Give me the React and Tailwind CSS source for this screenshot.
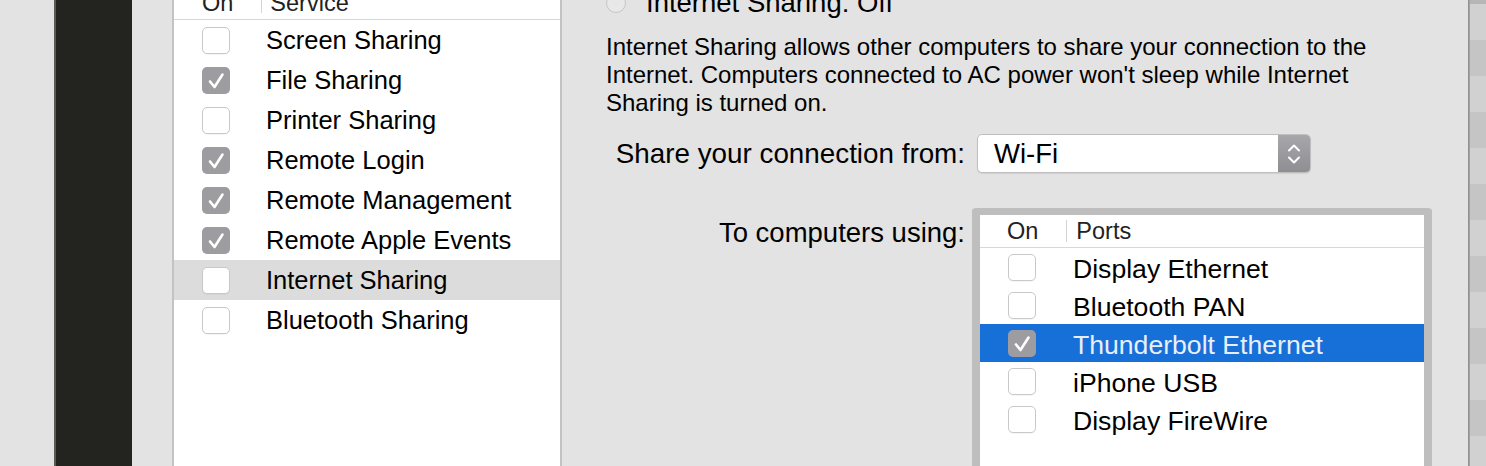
import React from "react";

const services = [
  { name: "Screen Sharing", on: false },
  { name: "File Sharing", on: true },
  { name: "Printer Sharing", on: false },
  { name: "Remote Login", on: true },
  { name: "Remote Management", on: true },
  { name: "Remote Apple Events", on: true },
  { name: "Internet Sharing", on: false, selected: true },
  { name: "Bluetooth Sharing", on: false },
];

const ports = [
  { name: "Display Ethernet", on: false },
  { name: "Bluetooth PAN", on: false },
  { name: "Thunderbolt Ethernet", on: true, selected: true },
  { name: "iPhone USB", on: false },
  { name: "Display FireWire", on: false },
];

// alternating bands of the window peeking in at the right edge
const bands = [0, 1, 2, 3, 4, 5, 6, 7, 8, 9, 10, 11, 12];

const Check = ({ on }) =>
  on ? (
    <span className="flex h-[27px] w-[28px] shrink-0 items-center justify-center rounded-[5px] bg-[#9d9ca1]">
      <svg width="28" height="27" viewBox="0 0 28 27" fill="none">
        <path d="M8 14.5 L12.5 20 L20.5 7.5" stroke="#fff" strokeWidth="2.6" strokeLinecap="round" strokeLinejoin="round" />
      </svg>
    </span>
  ) : (
    <span className="h-[27px] w-[28px] shrink-0 rounded-[5px] border border-[#c9c9c9] bg-white shadow-[0_1px_0_rgba(0,0,0,0.04)]" />
  );

export default function App() {
  return (
    <div className="flex h-[466px] w-[1486px] overflow-hidden bg-[#e3e3e3] font-['Liberation_Sans',Arial,sans-serif] text-black">
      {/* far left: window backdrop + dark strip */}
      <div className="w-[54px] shrink-0 bg-[#e3e3e3]" />
      <div className="w-[78px] shrink-0 border-l-2 border-[#5a5a55] bg-[#23231f]" />
      <div className="w-[40px] shrink-0 bg-[#e3e3e3]" />

      {/* service list */}
      <div className="flex w-[390px] shrink-0 flex-col border-x-2 border-[#c3c3c3] bg-white">
        <div className="flex h-[20px] shrink-0 overflow-hidden border-b border-[#d8d8d8] pl-[28px] text-[23.5px] leading-[22px] text-[#222]">
          <span className="-mt-[8px]">On</span>
          <span className="ml-[28px] h-[13px] w-px bg-[#d4d4d4]" />
          <span className="-mt-[8px] ml-[8px]">Service</span>
        </div>
        {services.map((s) => (
          <div
            key={s.name}
            className={`flex h-[40px] shrink-0 items-center pl-[28px] ${s.selected ? "bg-[#dcdcdc]" : ""}`}
          >
            <Check on={s.on} />
            <span className="ml-[36px] text-[25.5px] leading-[28px]">{s.name}</span>
          </div>
        ))}
      </div>

      {/* detail pane */}
      <div className="flex w-[906px] shrink-0 flex-col pl-[44px]">
        <div className="-mt-[11px] flex h-[28px] items-center">
          <span className="h-[20px] w-[20px] rounded-full border border-[#c6c6c6] bg-[#e8e8e8]" />
          <span className="ml-[20px] text-[27.5px] leading-[28px]">Internet Sharing: Off</span>
        </div>

        <p className="mt-[16px] text-[24px] leading-[28px]">
          Internet Sharing allows other computers to share your connection to the
          <br />
          Internet. Computers connected to AC power won't sleep while Internet
          <br />
          Sharing is turned on.
        </p>

        <div className="mt-[17px] flex items-center">
          <span className="w-[359px] text-right text-[27.8px] leading-[28px]">Share your connection from:</span>
          <div className="ml-[12px] flex h-[39px] w-[334px] overflow-hidden rounded-[5px] border border-[#bfbfbf] bg-white shadow-[0_1px_1px_rgba(0,0,0,0.08)]">
            <span className="flex-1 pl-[16px] text-[27.5px] leading-[37px]">Wi-Fi</span>
            <span className="flex w-[32px] flex-col items-center justify-center gap-[4px] bg-gradient-to-b from-[#a6a6ab] to-[#8e8e93]">
              <svg width="14" height="8" viewBox="0 0 14 8" fill="none">
                <path d="M2 6.5 L7 1.5 L12 6.5" stroke="#fff" strokeWidth="2" strokeLinecap="round" strokeLinejoin="round" />
              </svg>
              <svg width="14" height="8" viewBox="0 0 14 8" fill="none">
                <path d="M2 1.5 L7 6.5 L12 1.5" stroke="#fff" strokeWidth="2" strokeLinecap="round" strokeLinejoin="round" />
              </svg>
            </span>
          </div>
        </div>

        <div className="mt-[35px] flex items-start">
          <span className="w-[359px] pt-[11px] text-right text-[27.5px] leading-[28px]">To computers using:</span>
          <div className="ml-[7px] flex h-[300px] w-[460px] flex-col rounded-[4px] border-x-8 border-t-[7px] border-[#bebebe] bg-white">
            <div className="flex h-[33px] shrink-0 items-center border-b border-[#d8d8d8] pl-[27px] text-[23.5px] leading-[24px] text-[#222]">
              <span>On</span>
              <span className="ml-[28px] h-[22px] w-px bg-[#d4d4d4]" />
              <span className="ml-[9px]">Ports</span>
            </div>
            {ports.map((p) => (
              <div
                key={p.name}
                className={`flex h-[38px] shrink-0 items-center pl-[28px] ${p.selected ? "bg-[#1670d8] text-[#e8effa]" : ""}`}
              >
                <Check on={p.on} />
                <span className="ml-[37px] mt-[3px] text-[26.6px] leading-[28px]">{p.name}</span>
              </div>
            ))}
          </div>
        </div>
      </div>

      {/* right edge of the neighbouring window */}
      <div className="w-[2px] shrink-0 bg-gradient-to-r from-[#8a8a8a] to-[#a9a9a9]" />
      <div className="flex w-[16px] shrink-0 flex-col">
        <div className="h-[4px] shrink-0 bg-[#b6b6b6]" />
        {bands.map((i) => (
          <div key={i} className={`h-[36px] shrink-0 ${i % 2 === 0 ? "bg-[#d1d1d1]" : "bg-[#c5c5c5]"}`} />
        ))}
      </div>
    </div>
  );
}
